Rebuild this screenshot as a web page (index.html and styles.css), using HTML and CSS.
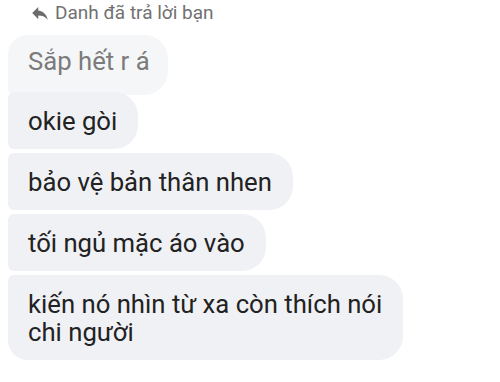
FILE: index.html
```html
<!DOCTYPE html>
<html lang="vi">
<head>
    <meta charset="UTF-8">
    <meta name="viewport" content="width=device-width, initial-scale=1.0">
    <title>Tin nhắn</title>
    <link rel="stylesheet" href="styles.css">
</head>
<body>
    <div class="thread">
        <div class="reply-label">
            <svg class="reply-icon" viewBox="3 5 18 15" width="16" height="13">
                <path d="M10 9V5l-7 7 7 7v-4.1c5 0 8.5 1.6 11 5.1-1-5-4-10-11-11z" fill="#6b6b6b"/>
            </svg>
            <span>Danh đã trả lời bạn</span>
        </div>
        <div class="bubble quoted">Sắp hết r á</div>
        <div class="bubble first">okie gòi</div>
        <div class="bubble">bảo vệ bản thân nhen</div>
        <div class="bubble">tối ngủ mặc áo vào</div>
        <div class="bubble last">kiến nó nhìn từ xa còn thích nói<br>chi người</div>
    </div>
</body>
</html>
```

FILE: styles.css
```css
body {
    margin: 0;
    background: #fff;
    font-family: Roboto, "Liberation Sans", sans-serif;
}
.thread {
    display: flex;
    flex-direction: column;
    align-items: flex-start;
    gap: 4px;
    padding-left: 8px;
}
.reply-label {
    display: flex;
    align-items: center;
    gap: 7px;
    margin-left: 24px;
    padding-top: 1px;
    line-height: 24px;
    font-size: 19px;
    color: #717171;
}
.reply-icon {
    margin-top: 1px;
}
.bubble {
    background: #f0f1f5;
    color: #222;
    font-size: 25.7px;
    line-height: 28px;
    padding: 14.5px 21px 14.5px 20px;
    border-radius: 6px 24px 24px 6px;
}
.quoted {
    background: #f5f6f8;
    color: #7b7b7b;
    margin-top: 6px;
    padding: 12px 18px 20px 20px;
    margin-bottom: -7px;
    border-radius: 20px 24px 24px 6px;
}
.first {
    position: relative;
}
.last {
    border-radius: 6px 24px 24px 20px;
}
```
